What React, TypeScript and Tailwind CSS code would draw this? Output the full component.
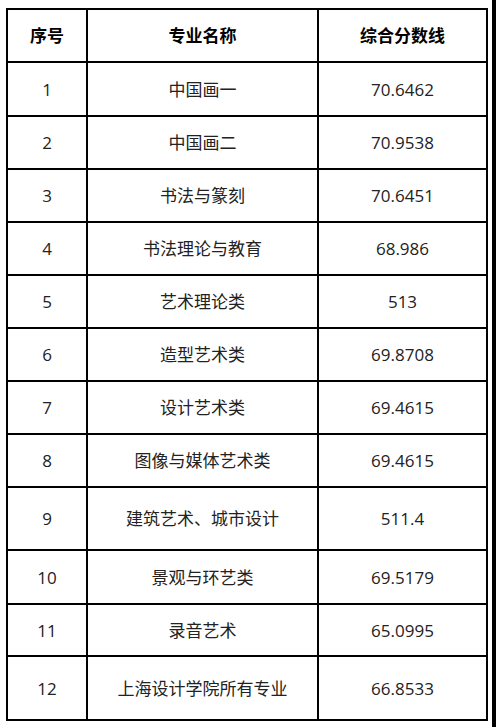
const rows: { no: string; name: string; score: string; h: string }[] = [
  { no: '1', name: '中国画一', score: '70.6462', h: 'h-[54px]' },
  { no: '2', name: '中国画二', score: '70.9538', h: 'h-[53px]' },
  { no: '3', name: '书法与篆刻', score: '70.6451', h: 'h-[53px]' },
  { no: '4', name: '书法理论与教育', score: '68.986', h: 'h-[53px]' },
  { no: '5', name: '艺术理论类', score: '513', h: 'h-[53px]' },
  { no: '6', name: '造型艺术类', score: '69.8708', h: 'h-[53px]' },
  { no: '7', name: '设计艺术类', score: '69.4615', h: 'h-[53px]' },
  { no: '8', name: '图像与媒体艺术类', score: '69.4615', h: 'h-[53px]' },
  { no: '9', name: '建筑艺术、城市设计', score: '511.4', h: 'h-[63px]' },
  { no: '10', name: '景观与环艺类', score: '69.5179', h: 'h-[54px]' },
  { no: '11', name: '录音艺术', score: '65.0995', h: 'h-[52px]' },
  { no: '12', name: '上海设计学院所有专业', score: '66.8533', h: 'h-[62px]' },
];

function Row({ no, name, score, h, last, head }: { no: string; name: string; score: string; h: string; last?: boolean; head?: boolean }) {
  const text = head ? 'font-bold text-black' : 'text-[#222]';
  return (
    <div className={`flex ${h} ${last ? '' : 'border-b-2 border-black'} ${text}`}>
      <div className="w-[80px] border-r-2 border-black flex items-center justify-center">{no}</div>
      <div className="w-[231px] border-r-2 border-black flex items-center justify-center">{name}</div>
      <div className="w-[167px] flex items-center justify-center">{score}</div>
    </div>
  );
}

export default function App() {
  return (
    <div
      className="flex w-[496px] h-[727px] bg-white text-[17px] leading-none"
      style={{ fontFamily: '"Open Sans", "Noto Sans CJK SC", sans-serif' }}
    >
      <div className="flex-1 pl-[6px] pt-[8px]">
        <div className="w-[482px] border-2 border-black">
          <Row no="序号" name="专业名称" score="综合分数线" h="h-[53px]" head />
          {rows.map((r, i) => (
            <Row key={r.no} {...r} last={i === rows.length - 1} />
          ))}
        </div>
      </div>
      <div className="w-[4px] bg-black" />
    </div>
  );
}
